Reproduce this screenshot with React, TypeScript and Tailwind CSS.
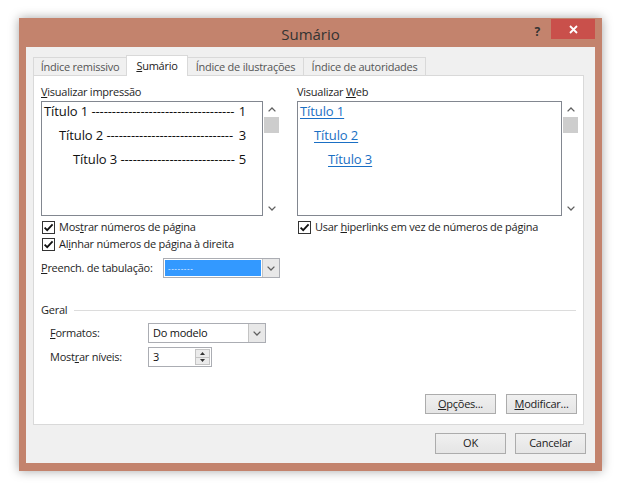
import React from "react";

function Check() {
  return (
    <span className="flex h-[13px] w-[13px] shrink-0 items-center justify-center border border-[#333] bg-white">
      <svg width="11" height="11" viewBox="0 0 11 11">
        <path d="M1.6 5.6 L4.2 8.2 L9.6 2.4" fill="none" stroke="#111" strokeWidth="1.8" />
      </svg>
    </span>
  );
}

function Chevron({ up = false }: { up?: boolean }) {
  return (
    <svg width="8" height="5" viewBox="0 0 8 5">
      <polyline
        points={up ? "0.6,4.4 4,1 7.4,4.4" : "0.6,0.6 4,4 7.4,0.6"}
        fill="none"
        stroke="#606060"
        strokeWidth="1.3"
      />
    </svg>
  );
}

function Scrollbar() {
  return (
    <div className="flex h-full w-[17px] flex-col items-center">
      <div className="flex h-[16px] items-center justify-center">
        <Chevron up />
      </div>
      <div className="h-[16px] w-[15px] bg-[#cdcdcd]" />
      <div className="flex-1" />
      <div className="flex h-[16px] items-center justify-center">
        <Chevron />
      </div>
    </div>
  );
}

function DropButton() {
  return (
    <div className="flex h-full w-[17px] items-center justify-center border-l border-[#c4c4c4] bg-[#e8e8e8]">
      <Chevron />
    </div>
  );
}

// tab leader lines of the print preview
function TocLine({ title, page, dashes, indent }: { title: string; page: string; dashes: number; indent: string }) {
  return (
    <div className={`flex h-[18px] items-center justify-between gap-[3px] pr-[16px] leading-[18px] ${indent}`}>
      <span className="whitespace-nowrap">
        {title} {"-".repeat(dashes)}
      </span>
      <span>{page}</span>
    </div>
  );
}

function Button({ children, h = "h-[20px]" }: { children: React.ReactNode; h?: string }) {
  return (
    <div
      className={`flex w-[71px] ${h} items-center justify-center border border-[#acacac] bg-gradient-to-b from-[#f0f0f0] to-[#e5e5e5] text-[#222]`}
    >
      {children}
    </div>
  );
}

export default function App() {
  return (
    <div className="h-[489px] w-[620px] bg-white pl-[19px] pt-[18px] font-['Open_Sans',sans-serif] text-[11px] tracking-[-0.25px] text-[#1e1e1e]">
      <div className="flex h-[453px] w-[583px] flex-col bg-[#c3836d] px-[7px] pb-[8px] shadow-[0_0_10px_rgba(0,0,0,0.35)]">
        {/* title bar */}
        <div className="grid h-[29px] grid-cols-[1fr_auto_1fr]">
          <div />
          <div className="flex items-center pt-[4px] text-[15px] tracking-normal text-[#333]">Sumário</div>
          <div className="flex items-start justify-end">
            <span className="mr-[11px] mt-[5px] text-[12px] font-bold text-[#333]">?</span>
            <div className="mt-[1px] flex h-[20px] w-[44px] items-center justify-center bg-[#c9504b]">
              <svg width="9" height="9" viewBox="0 0 9 9">
                <path d="M1 1 L8 8 M8 1 L1 8" stroke="#fff" strokeWidth="1.8" />
              </svg>
            </div>
          </div>
        </div>

        {/* client area */}
        <div className="flex flex-1 flex-col bg-[#f0f0f0] pl-[7px] pr-[9px] pt-[8px]">
          {/* tabs */}
          <div className="flex h-[20px] items-end">
            <div className="flex h-[18px] w-[93px] items-center justify-center border-l border-t border-[#d9d9d9] pt-[1px] text-[#555]">
              Índice remissivo
            </div>
            <div className="relative z-10 -mb-px flex h-[21px] w-[62px] items-center justify-center border border-b-0 border-[#d9d9d9] bg-white text-[#222]">
              <span>
                <u>S</u>umário
              </span>
            </div>
            <div className="flex h-[18px] w-[115px] items-center justify-center border-t border-[#d9d9d9] pt-[1px] text-[#555]">
              Índice de ilustrações
            </div>
            <div className="flex h-[18px] w-[123px] items-center justify-center border-l border-r border-t border-[#d9d9d9] pt-[1px] text-[#555]">
              Índice de autoridades
            </div>
          </div>

          {/* tab panel */}
          <div className="mr-[2px] flex h-[350px] flex-col border border-[#d9d9d9] bg-white pl-[7px] pr-[6px] pt-[8px]">
            <div className="flex">
              {/* print preview */}
              <div className="flex w-[239px] flex-col">
                <div className="h-[16px] leading-[16px]">
                  <u>V</u>isualizar impressão
                </div>
                <div className="mt-[1px] flex h-[115px]">
                  <div className="flex w-[222px] flex-col gap-[6px] border border-[#828790] text-[13px] tracking-[-0.1px] text-[#111]">
                    <TocLine title="Título 1" page="1" dashes={35} indent="pl-[2px]" />
                    <TocLine title="Título 2" page="3" dashes={31} indent="pl-[17px]" />
                    <TocLine title="Título 3" page="5" dashes={28} indent="pl-[31px]" />
                  </div>
                  <Scrollbar />
                </div>
                <div className="mt-[3px] flex h-[17px] items-center gap-[4px] pl-[1px]">
                  <Check />
                  <span>
                    Mos<u>t</u>rar números de página
                  </span>
                </div>
                <div className="flex h-[17px] items-center gap-[4px] pl-[1px]">
                  <Check />
                  <span>
                    Al<u>i</u>nhar números de página à direita
                  </span>
                </div>
                <div className="mt-[5px] flex h-[20px] items-center">
                  <span className="w-[122px]">
                    <u>P</u>reench. de tabulação:
                  </span>
                  <div className="flex h-[20px] w-[117px] border border-[#abadb3] bg-white">
                    <div className="m-[1px] flex flex-1 items-center bg-[#3399ff] pl-[3px] text-[8px] tracking-[0.6px] text-white">
                      --------
                    </div>
                    <DropButton />
                  </div>
                </div>
              </div>

              {/* divider */}
              <div className="ml-[8px] mt-[2px] h-[214px] w-px bg-[#a0a0a0]" />

              {/* web preview */}
              <div className="ml-[9px] flex w-[282px] flex-col">
                <div className="h-[16px] leading-[16px]">
                  Visualizar <u>W</u>eb
                </div>
                <div className="mt-[1px] flex h-[115px]">
                  <div className="flex w-[265px] flex-col gap-[6px] border border-[#828790] text-[13px] tracking-[-0.1px] text-[#1a6fc4]">
                    <div className="h-[18px] pl-[2px] leading-[18px]">
                      <span className="underline underline-offset-2">Título 1</span>
                    </div>
                    <div className="h-[18px] pl-[16px] leading-[18px]">
                      <span className="underline underline-offset-2">Título 2</span>
                    </div>
                    <div className="h-[18px] pl-[30px] leading-[18px]">
                      <span className="underline underline-offset-2">Título 3</span>
                    </div>
                  </div>
                  <Scrollbar />
                </div>
                <div className="mt-[3px] flex h-[17px] items-center gap-[4px] pl-[1px]">
                  <Check />
                  <span>
                    Usar <u>h</u>iperlinks em vez de números de página
                  </span>
                </div>
              </div>
            </div>

            {/* Geral */}
            <div className="mt-[2px] flex h-[16px] items-center">
              <span>Geral</span>
              <div className="ml-[7px] mr-[1px] h-px flex-1 bg-[#dcdcdc]" />
            </div>
            <div className="mt-[5px] flex h-[20px] items-center pl-[9px]">
              <span className="w-[98px]">
                <u>F</u>ormatos:
              </span>
              <div className="flex h-[20px] w-[118px] border border-[#abadb3] bg-white">
                <div className="flex flex-1 items-center pl-[4px] text-[#111]">Do modelo</div>
                <DropButton />
              </div>
            </div>
            <div className="mt-[4px] flex h-[20px] items-center pl-[9px]">
              <span className="w-[98px]">
                Most<u>r</u>ar níveis:
              </span>
              <div className="flex h-[20px] w-[64px] border border-[#abadb3] bg-white">
                <div className="flex flex-1 items-center pl-[4px] text-[#111]">3</div>
                <div className="my-[1px] mr-[1px] flex w-[15px] flex-col border border-[#c4c4c4] bg-[#ebebeb]">
                  <div className="flex flex-1 items-center justify-center border-b border-[#c4c4c4]">
                    <svg width="5" height="3" viewBox="0 0 5 3">
                      <path d="M0 3 L2.5 0 L5 3 Z" fill="#333" />
                    </svg>
                  </div>
                  <div className="flex flex-1 items-center justify-center">
                    <svg width="5" height="3" viewBox="0 0 5 3">
                      <path d="M0 0 L2.5 3 L5 0 Z" fill="#333" />
                    </svg>
                  </div>
                </div>
              </div>
            </div>
            <div className="mt-[27px] flex justify-end gap-[10px]">
              <Button>
                <span>
                  <u>O</u>pções...
                </span>
              </Button>
              <Button>
                <span>
                  <u>M</u>odificar...
                </span>
              </Button>
            </div>
          </div>

          {/* dialog buttons */}
          <div className="mt-[8px] flex justify-end gap-[9px]">
            <Button h="h-[21px]">OK</Button>
            <Button h="h-[21px]">Cancelar</Button>
          </div>
        </div>
      </div>
    </div>
  );
}
